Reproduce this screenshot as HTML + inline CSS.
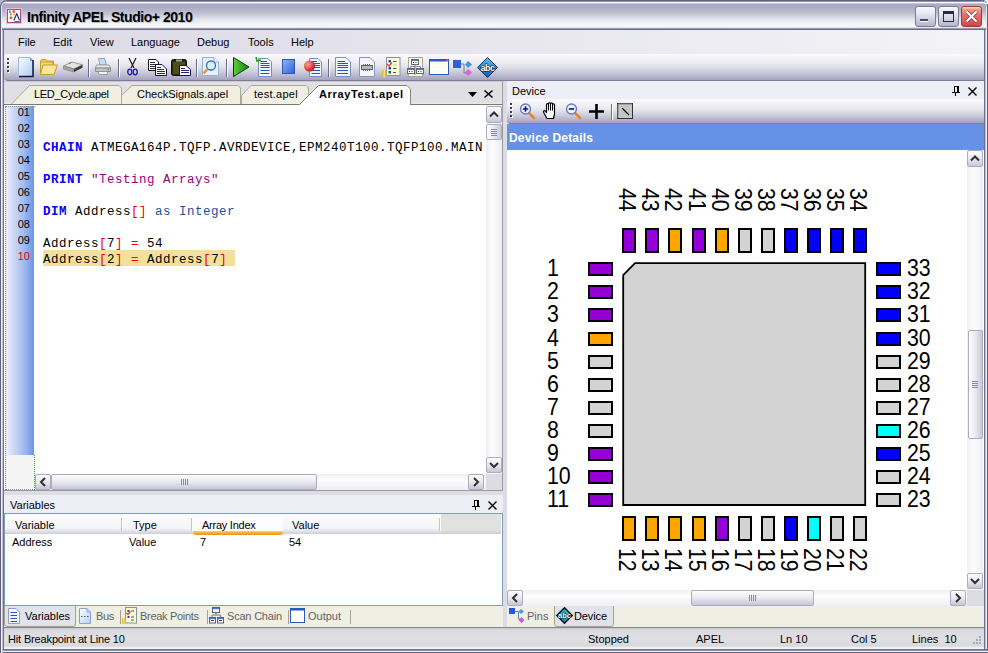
<!DOCTYPE html>
<html><head><meta charset="utf-8">
<style>
*{margin:0;padding:0;box-sizing:border-box}
html,body{width:988px;height:653px;overflow:hidden;background:#E3E2EC}
body{position:relative;font-family:"Liberation Sans",sans-serif;font-size:11px;color:#000}
.a{position:absolute}
.t{position:absolute;white-space:pre;line-height:13px}
svg{position:absolute;overflow:visible}
.sbtn{border:1px solid #ACACC0;border-radius:2px;background:linear-gradient(#FDFDFF,#E6E6EE 55%,#C6C6D6)}
.sbv{background:linear-gradient(90deg,#FDFDFF,#E6E6EE 55%,#C6C6D6)}
</style></head><body>

<!-- desktop corners -->
<div class="a" style="left:0;top:0;width:988px;height:12px;background:#B4B4CC"></div>
<!-- title bar -->
<div class="a" id="title" style="left:0;top:0;width:988px;height:30px;border:1px solid #5F5F80;border-bottom:none;border-radius:7px 7px 0 0;box-shadow:inset 1px 0 0 #E8E8F0,inset -1px 0 0 #E8E8F0;background:linear-gradient(#9090A8 0px,#9090A8 1px,#FAFAFC 1px,#FAFAFC 2px,#C8C8D8 2px,#C8C8D8 3px,#A8A8C2 3px,#ADADC5 7px,#C4C4D4 13px,#E2E2EA 18px,#F4F4F7 23px,#F8F8F8 25px,#F8F8F8 26px,#E8E6E0 26px,#E8E6E0 27px,#9A9AB0 27px,#9A9AB0 28px,#6C6C8C 28px)"></div>

<!-- frame -->
<div class="a" style="left:0;top:30px;width:4px;height:623px;background:linear-gradient(90deg,#60607E 0,#60607E 1px,#F0F0F6 1px,#F0F0F6 2px,#C0C0D0 2px,#C0C0D0 3px,#707090 3px)"></div>
<div class="a" style="left:984px;top:30px;width:4px;height:623px;background:linear-gradient(90deg,#707090 0,#707090 1px,#C0C0D0 1px,#C0C0D0 2px,#F0F0F6 2px,#F0F0F6 3px,#60607E 3px)"></div>
<div class="a" style="left:0;top:649px;width:988px;height:4px;background:linear-gradient(#6E6E8E 0,#6E6E8E 1px,#9090A8 1px,#9090A8 2px,#F0F0F6 2px,#F0F0F6 3px,#60607E 3px)"></div>
<div class="a" style="left:0;top:649px;width:3px;height:4px;background:linear-gradient(90deg,#60607E 0,#60607E 1px,#F0F0F6 1px,#F0F0F6 2px,#C0C0D0 2px)"></div>

<!-- app icon -->
<svg style="left:6px;top:8px" width="16" height="16" viewBox="0 0 16 16">
<rect x="0.5" y="0.5" width="15" height="15" fill="#fff" stroke="#E8C0D0"/>
<rect x="1.5" y="1.5" width="13" height="13" fill="#fff" stroke="#B04880"/>
<path d="M4 3.5 L9 9" stroke="#B0B0C0" stroke-width="0.8" stroke-dasharray="1 1"/>
<circle cx="4" cy="3.8" r="1.3" fill="#5AA0E0"/><circle cx="7.8" cy="3.6" r="1.5" fill="#E86030"/>
<circle cx="4.8" cy="6.6" r="1.1" fill="#70A878"/><circle cx="8.3" cy="6.5" r="1.1" fill="#D8C030"/>
<circle cx="5" cy="9.7" r="1.5" fill="#E86030"/>
<path d="M7.8 12.5 L10.8 5.8 L13.6 12.5" fill="none" stroke="#283888" stroke-width="1.2"/>
<path d="M8.5 13.5 H13.5" stroke="#5868A8"/>
</svg>
<div class="t" style="left:27px;top:9px;font-size:14px;font-weight:bold;color:#000;line-height:16px;letter-spacing:-0.45px;text-shadow:1px 1px 0 rgba(60,60,90,0.25)">Infinity APEL Studio+ 2010</div>

<!-- caption buttons -->
<div class="a" style="left:915px;top:6px;width:21px;height:21px;border:1px solid #7C7C98;border-radius:3px;background:linear-gradient(#FAFAFC,#E4E4EE 40%,#B4B4CA)"></div>
<div class="a" style="left:920px;top:19px;width:8px;height:3px;background:#4A4A66;border-bottom:1px solid #fff"></div>
<div class="a" style="left:938px;top:6px;width:21px;height:21px;border:1px solid #7C7C98;border-radius:3px;background:linear-gradient(#FAFAFC,#E4E4EE 40%,#B4B4CA)"></div>
<div class="a" style="left:943px;top:11px;width:11px;height:11px;border:1px solid #2A2A40;border-top:3px solid #2A2A40;background:transparent"></div>
<div class="a" style="left:961px;top:6px;width:21px;height:21px;border:1px solid #A83838;border-radius:3px;background:linear-gradient(#F4D8A8 0,#F4D8A8 1px,#F2A088 2px,#E87070 40%,#D85858 80%,#C84848)"></div>
<svg style="left:961px;top:6px" width="21" height="21" viewBox="0 0 21 21"><path d="M5.5 5.5 L15.5 15.5 M15.5 5.5 L5.5 15.5" stroke="#402020" stroke-width="3.6" opacity="0.55"/><path d="M5.5 5.5 L15.5 15.5 M15.5 5.5 L5.5 15.5" stroke="#fff" stroke-width="2"/></svg>
<div class="a" style="left:984px;top:0;width:4px;height:4px;background:#F8F8F0"></div>
<svg style="left:983px;top:0" width="5" height="4" viewBox="0 0 5 4"><path d="M0.5 0 L3.5 3" stroke="#0000E0" stroke-dasharray="1 0.5"/></svg>

<!-- menu bar -->
<div class="a" style="left:4px;top:30px;width:980px;height:24px;background:linear-gradient(90deg,#DAD9E4,#E2E1EB 30%,#F3F3F7)"></div>
<div class="t" style="left:18px;top:36px">File</div>
<div class="t" style="left:53px;top:36px">Edit</div>
<div class="t" style="left:90px;top:36px">View</div>
<div class="t" style="left:131px;top:36px">Language</div>
<div class="t" style="left:197px;top:36px">Debug</div>
<div class="t" style="left:248px;top:36px">Tools</div>
<div class="t" style="left:291px;top:36px">Help</div>

<!-- main toolbar -->
<div class="a" style="left:4px;top:54px;width:980px;height:27px;border-radius:4px 0 0 4px;background:linear-gradient(#FAFAFD,#F2F2F6 22%,#E2E2EA 48%,#CACADA 70%,#A4A2BF);border-bottom:1px solid #7E7C98"></div>

<!-- toolbar gripper -->
<svg style="left:7px;top:58px" width="3" height="15" viewBox="0 0 3 15"><g fill="#fff"><rect x="1" y="1" width="2" height="2"/><rect x="1" y="5" width="2" height="2"/><rect x="1" y="9" width="2" height="2"/><rect x="1" y="13" width="2" height="2"/></g><g fill="#3C3C5C"><rect x="0" y="0" width="2" height="2"/><rect x="0" y="4" width="2" height="2"/><rect x="0" y="8" width="2" height="2"/><rect x="0" y="12" width="2" height="2"/></g></svg>
<!-- new -->
<svg style="left:18px;top:57px" width="17" height="20" viewBox="0 0 17 20"><defs><linearGradient id="gdoc" x1="0" y1="0" x2="1" y2="1"><stop offset="0" stop-color="#FFFFFF"/><stop offset="1" stop-color="#A8C8F0"/></linearGradient></defs><path d="M0.5 0.5 H12 L15.5 4 V19.5 H0.5 Z" fill="url(#gdoc)" stroke="#9CB8E0"/><path d="M12 0.5 L15.5 4 H12 Z" fill="#5AA0E8"/><path d="M15 3 V19.5 H1" fill="none" stroke="#0A1A40" stroke-width="1.5"/></svg>
<!-- open -->
<svg style="left:40px;top:59px" width="18" height="16" viewBox="0 0 18 16"><path d="M0.5 2 L1.5 0.5 H6 L7 2 H13.5 V5 H0.5 Z" fill="#F0D070" stroke="#C8A030"/><path d="M0.5 3 H13 V14 H0.5 Z" fill="#F2D878" stroke="#C89A28"/><path d="M3 6 H17.5 L14 15.5 H0.5 Z" fill="#FBE89A" stroke="#C89A28"/></svg>
<!-- save/disk -->
<svg style="left:63px;top:61px" width="20" height="12" viewBox="0 0 20 12"><path d="M0.5 5 L9 1 L19.5 3.8 L11 8 Z" fill="#E4E4E4" stroke="#8A8A8A" stroke-width="0.8"/><path d="M0.5 5 L11 8 V11 L0.5 8 Z" fill="#A8A8A8" stroke="#707070" stroke-width="0.6"/><path d="M11 8 L19.5 3.8 V6.8 L11 11 Z" fill="#3A3A3A"/><path d="M6 2.6 L8 1.6" stroke="#606060"/></svg>
<div class="a" style="left:88px;top:59px;width:1px;height:18px;background:#6A6A8C;box-shadow:1px 0 0 #fff"></div>
<!-- print -->
<svg style="left:95px;top:58px" width="16" height="18" viewBox="0 0 16 18"><path d="M3.5 0.5 H9.5 L11.5 7 H5 Z" fill="#C4DEF8" stroke="#8090A8" stroke-width="0.8"/><path d="M1.5 7 H14 L15.5 10 H0.5 Z" fill="#ECECEC" stroke="#909090" stroke-width="0.8"/><path d="M0.5 10 H15.5 V13.5 H0.5 Z" fill="#C4C4C4" stroke="#7C7C7C" stroke-width="0.8"/><path d="M3 13.5 H13 L12 16.5 H4 Z" fill="#F4F4F4" stroke="#8C8C8C" stroke-width="0.8"/><rect x="12.5" y="11" width="1.5" height="1.2" fill="#40B040"/></svg>
<div class="a" style="left:118px;top:59px;width:1px;height:18px;background:#6A6A8C;box-shadow:1px 0 0 #fff"></div>
<!-- cut -->
<svg style="left:127px;top:58px" width="11" height="18" viewBox="0 0 11 18"><path d="M2 0 L7 10 M9 0 L4 10" stroke="#1A1A1A" stroke-width="1.2"/><ellipse cx="2.8" cy="14" rx="2" ry="2.8" fill="none" stroke="#1818A8" stroke-width="1.3"/><ellipse cx="8.2" cy="14" rx="2" ry="2.8" fill="none" stroke="#1818A8" stroke-width="1.3"/></svg>
<!-- copy -->
<svg style="left:148px;top:59px" width="19" height="17" viewBox="0 0 19 17"><path d="M0.5 0.5 H8 L10.5 3 V11.5 H0.5 Z" fill="#fff" stroke="#181818"/><path d="M2 3.5 H7 M2 5.5 H8 M2 7.5 H7 M2 9.5 H8" stroke="#303030"/><path d="M7.5 5.5 H14 L18.5 10 V16.5 H7.5 Z" fill="#fff" stroke="#10105A"/><path d="M9 8.5 H13 M9 10.5 H16 M9 12.5 H17 M9 14.5 H17" stroke="#20207A"/></svg>
<!-- paste -->
<svg style="left:171px;top:58px" width="21" height="18" viewBox="0 0 21 18"><rect x="0.5" y="1.5" width="15" height="16" rx="2" fill="#2A2A10" stroke="#101008"/><path d="M2 4 H14 V16 H2Z" fill="#585820" opacity="0.8"/><path d="M5 1.5 H11 V3.5 H5Z" fill="#A8A880"/><path d="M8.5 7.5 H15 L19.5 11.5 V17.5 H8.5 Z" fill="#fff" stroke="#10105A"/><path d="M10 10.5 H14 M10 12.5 H18 M10 14.5 H18" stroke="#20207A"/></svg>
<div class="a" style="left:196px;top:59px;width:1px;height:18px;background:#6A6A8C;box-shadow:1px 0 0 #fff"></div>
<!-- find -->
<svg style="left:202px;top:57px" width="17" height="19" viewBox="0 0 17 19"><path d="M0.5 0.5 H12 L16.5 5 V18.5 H0.5 Z" fill="#E8F0FC" stroke="#98B0D8"/><path d="M12 0.5 V5 H16.5" fill="#fff" stroke="#98B0D8"/><circle cx="9" cy="8.5" r="4.5" fill="#D8F0FF" stroke="#3870B8" stroke-width="1.3"/><path d="M5.5 12 L1.5 16.5" stroke="#E89030" stroke-width="2.2"/></svg>
<div class="a" style="left:226px;top:59px;width:1px;height:18px;background:#6A6A8C;box-shadow:1px 0 0 #fff"></div>
<!-- run -->
<svg style="left:233px;top:57px" width="17" height="20" viewBox="0 0 17 20"><defs><linearGradient id="grun" x1="0" y1="0" x2="1" y2="0"><stop offset="0" stop-color="#60D040"/><stop offset="1" stop-color="#108010"/></linearGradient></defs><path d="M0.5 0.5 L16 10 L0.5 19.5 Z" fill="url(#grun)" stroke="#004000"/></svg>
<!-- step doc -->
<svg style="left:255px;top:57px" width="18" height="20" viewBox="0 0 18 20"><path d="M3.5 1.5 H13 L16.5 5 V19.5 H3.5 Z" fill="#F0F4FC" stroke="#7890B8"/><path d="M5.5 4.5 H12 M5.5 6.5 H14.5 M5.5 8.5 H14.5 M5.5 10.5 H14.5 M5.5 13.5 H14.5 M5.5 16.5 H14.5" stroke="#3050B8"/><path d="M1 0 L2 4 L6 3" fill="none" stroke="#20A020" stroke-width="1.5"/></svg>
<!-- stop -->
<svg style="left:282px;top:59px" width="13" height="15" viewBox="0 0 13 15"><defs><linearGradient id="gstop" x1="0" y1="0" x2="1" y2="1"><stop offset="0" stop-color="#90B8F8"/><stop offset="1" stop-color="#3060D0"/></linearGradient></defs><rect x="0.5" y="0.5" width="12" height="14" fill="url(#gstop)" stroke="#3058B8"/></svg>
<!-- breakpoint doc -->
<svg style="left:304px;top:57px" width="19" height="20" viewBox="0 0 19 20"><path d="M5.5 1.5 H14 L17.5 5 V19.5 H5.5 Z" fill="#F0F4FC" stroke="#7890B8"/><path d="M7.5 4.5 H13 M7.5 6.5 H16 M7.5 8.5 H16 M7.5 10.5 H16 M7.5 13.5 H16 M7.5 16.5 H16" stroke="#3050B8"/><defs><radialGradient id="gbp" cx="0.35" cy="0.35" r="0.7"><stop offset="0" stop-color="#FFA0A0"/><stop offset="1" stop-color="#C81010"/></radialGradient></defs><circle cx="5.5" cy="9" r="5.5" fill="url(#gbp)"/></svg>
<div class="a" style="left:328px;top:59px;width:1px;height:18px;background:#6A6A8C;box-shadow:1px 0 0 #fff"></div>
<!-- doc -->
<svg style="left:335px;top:57px" width="16" height="20" viewBox="0 0 16 20"><path d="M0.5 0.5 H11 L15.5 5 V19.5 H0.5 Z" fill="#F0F4FC" stroke="#7890B8"/><path d="M2.5 4.5 H10 M2.5 6.5 H13 M2.5 8.5 H13 M2.5 10.5 H13 M2.5 13.5 H13 M2.5 16.5 H13" stroke="#3050B8"/></svg>
<!-- doc chip -->
<svg style="left:359px;top:57px" width="16" height="20" viewBox="0 0 16 20"><path d="M0.5 0.5 H11 L15.5 5 V19.5 H0.5 Z" fill="#F4F6FC" stroke="#8898B8"/><rect x="2.5" y="8.5" width="11" height="4" fill="#B8B8C0" stroke="#606068"/><path d="M4.5 7 V8 M6.5 7 V8 M8.5 7 V8 M10.5 7 V8 M4.5 13 V14 M6.5 13 V14 M8.5 13 V14 M10.5 13 V14" stroke="#606068"/></svg>
<!-- checklist -->
<svg style="left:382px;top:57px" width="19" height="20" viewBox="0 0 19 20"><rect x="4.5" y="0.5" width="13.5" height="18" fill="#FFFCD8" stroke="#8890A0"/><rect x="6.5" y="3" width="2.5" height="2.5" fill="#205090"/><rect x="6.5" y="10" width="2.5" height="2.5" fill="#205090"/><rect x="6.5" y="14" width="2.5" height="2.5" fill="#205090"/><path d="M5 7 L7 9 L10 5.5" fill="none" stroke="#E04030" stroke-width="1.4"/><path d="M11 4.5 H14.5 M11 11.5 H14.5 M11 15.5 H14" stroke="#405080"/><path d="M11 8 H15" stroke="#C8C8B8"/><rect x="0" y="13" width="4.5" height="7" rx="1" fill="#E8B830"/><rect x="1.5" y="13" width="1.5" height="7" fill="#F8E080"/></svg>
<!-- hierarchy -->
<svg style="left:407px;top:57px" width="17" height="20" viewBox="0 0 17 20"><rect x="1.5" y="0.5" width="14" height="19" fill="#FFFAD0" stroke="#A0A898"/><rect x="4.5" y="2.5" width="7" height="5" fill="#fff" stroke="#606878"/><rect x="5" y="3" width="6" height="1" fill="#4878D8"/><path d="M6 5.5 H7 M8.5 5.5 H9.5" stroke="#404850"/><path d="M8 7.5 V9.5 M3.5 9.5 H13.5 M3.5 9.5 V11 M13.5 9.5 V11 M8 9.5 V18" stroke="#808890"/><rect x="0.5" y="11.5" width="7" height="5" fill="#fff" stroke="#606878"/><rect x="1" y="12" width="6" height="1" fill="#4878D8"/><rect x="9.5" y="11.5" width="7" height="5" fill="#fff" stroke="#606878"/><rect x="10" y="12" width="6" height="1" fill="#4878D8"/><path d="M2 14.5 H3 M4.5 14.5 H5.5 M11 14.5 H12 M13.5 14.5 H14.5" stroke="#404850"/></svg>
<!-- window -->
<svg style="left:429px;top:59px" width="20" height="16" viewBox="0 0 20 16"><rect x="0.5" y="0.5" width="19" height="15" fill="#FFFFF4" stroke="#2858B8"/><rect x="0" y="0" width="20" height="2.5" fill="#2858C8"/><rect x="17" y="0.5" width="2" height="1.5" fill="#E06040"/></svg>
<!-- flow -->
<svg style="left:453px;top:60px" width="21" height="16" viewBox="0 0 21 16"><path d="M8 4 H11 M11 4 V13 H14" stroke="#6080A0" fill="none"/><rect x="0" y="0" width="8" height="8" fill="#3060D8"/><path d="M15 1 L19 4.5 L15 8 L12 4.5 Z" fill="#4890E8"/><path d="M15 9 L19 12.5 L15 16 L12 12.5 Z" fill="#E060E0"/></svg>
<!-- abc -->
<svg style="left:477px;top:57px" width="21" height="21" viewBox="0 0 21 21"><defs><linearGradient id="gabc" x1="0" y1="0" x2="0" y2="1"><stop offset="0" stop-color="#60C0F8"/><stop offset="1" stop-color="#0858A8"/></linearGradient></defs><path d="M10.5 0.5 L20.5 10.5 L10.5 20.5 L0.5 10.5 Z" fill="url(#gabc)" stroke="#083060"/><text x="10.5" y="13.5" font-family="Liberation Sans" font-size="9" font-weight="bold" text-anchor="middle" fill="#fff" stroke="#002040" stroke-width="1.2" paint-order="stroke" letter-spacing="-0.5">abc</text></svg>

<!-- left tab strip -->
<div class="a" style="left:4px;top:81px;width:499px;height:24px;background:linear-gradient(#BDBCC6 0,#E2E2E6 1.5px,#E0E0E4 3px,#E0E0E4 21px,#E8E8EC 22px)"></div>
<div class="a" style="left:4px;top:104px;width:499px;height:1px;background:#ACA899"></div>

<!-- doc tabs -->
<svg style="left:0;top:80px" width="505" height="26" viewBox="0 80 505 26">
<path d="M11 104.5 L29.5 85.5 H119 L121.5 88 V104" fill="#F1EFE2" stroke="#ACA899"/>
<path d="M121.5 104 V95.5 L132 85.5 H238 L240.5 88 V104" fill="#F1EFE2" stroke="#ACA899"/>
<path d="M241.5 104 V95.5 L251 85.5 H306 L308.5 88 V104" fill="#F1EFE2" stroke="#ACA899"/>
<path d="M299 105 L318.5 85.5 H407 L410.5 89 V105" fill="#FFFFFF" stroke="#8A877A"/>
<path d="M4 104.5 H299 M410.5 104.5 H502" stroke="#7C7A6C"/>
<path d="M468 92 H477 L472.5 97 Z" fill="#000"/>
<path d="M484.5 90.5 L492.5 97.5 M492.5 90.5 L484.5 97.5" stroke="#000" stroke-width="1.6"/>
</svg>
<div class="t" style="left:34px;top:88px;letter-spacing:-0.3px">LED_Cycle.apel</div>
<div class="t" style="left:137px;top:88px">CheckSignals.apel</div>
<div class="t" style="left:254px;top:88px;letter-spacing:0.25px">test.apel</div>
<div class="t" style="left:319px;top:88px;font-weight:bold;letter-spacing:0.65px">ArrayTest.apel</div>

<!-- splitter -->
<div class="a" style="left:502px;top:81px;width:1px;height:410px;background:#9A9AA2"></div>
<div class="a" style="left:503px;top:81px;width:4px;height:546px;background:#DCDCE2"></div>

<!-- editor -->
<div class="a" style="left:4px;top:105px;width:498px;height:385px;background:#fff"></div>
<div class="a" style="left:5px;top:106px;width:29px;height:349px;background:linear-gradient(90deg,#F0F2FA,#A8C0F0 60%,#6A96E6)"></div>
<div class="a" style="left:5px;top:455px;width:29px;height:35px;background:#F4F4F4"></div>

<!-- gutter dotted border -->
<div class="a" style="left:5px;top:106px;width:30px;height:384px;border-left:1px dotted #8C8CA0;border-top:1px dotted #8C8CA0;border-bottom:1px dotted #8C8CA0"></div>
<div class="a" style="left:34px;top:455px;width:1px;height:35px;border-left:1px dotted #4A80E0"></div>
<div class="a" style="left:5px;top:103px;width:30px;height:176px;font-size:11px;line-height:16px;text-align:right;padding-right:5px;padding-top:1px;color:#000;white-space:pre">01
02
03
04
05
06
07
08
09
<span style="color:#E00000">10</span></div>
<div class="a" style="left:43px;top:250px;width:192px;height:16px;background:#F3E09A"></div>
<div class="a" style="left:43px;top:108px;font-family:'Liberation Mono',monospace;font-size:12.5px;letter-spacing:0.5px;line-height:16px;white-space:pre;color:#000"><br><br><b style="color:#0000FF">CHAIN</b> ATMEGA164P.TQFP.AVRDEVICE,EPM240T100.TQFP100.MAIN
<br><b style="color:#0000FF">PRINT</b> <span style="color:#990080">"Testing Arrays"</span>
<br><b style="color:#0000FF">DIM</b> Address<span style="color:#F00000">[]</span> <span style="color:#1A4F9A">as Integer</span>
<br>Address<span style="color:#F00000">[</span>7<span style="color:#F00000">]</span> <span style="color:#F00000">=</span> 54
Address<span style="color:#F00000">[</span>2<span style="color:#F00000">]</span> <span style="color:#F00000">=</span> Address<span style="color:#F00000">[</span>7<span style="color:#F00000">]</span></div>

<!-- editor v scrollbar -->
<div class="a" style="left:486px;top:105px;width:16px;height:369px;background:linear-gradient(90deg,#F0F0F4,#FDFDFF 40%,#EEEEF2)"></div>
<div class="a sbtn" style="left:486px;top:106px;width:16px;height:17px"></div>
<svg style="left:486px;top:106px" width="16" height="17" viewBox="0 0 16 17"><path d="M4 10.5 L8 6.5 L12 10.5" fill="none" stroke="#303030" stroke-width="2"/></svg>
<div class="a sbtn sbv" style="left:486px;top:124px;width:16px;height:16px"></div>
<svg style="left:486px;top:124px" width="16" height="16" viewBox="0 0 16 16"><path d="M5 5.5 H11 M5 7.5 H11 M5 9.5 H11 M5 11.5 H11" stroke="#8A8AA0"/></svg>
<div class="a sbtn" style="left:486px;top:457px;width:16px;height:16px"></div>
<svg style="left:486px;top:457px" width="16" height="16" viewBox="0 0 16 16"><path d="M4 6 L8 10 L12 6" fill="none" stroke="#303030" stroke-width="2"/></svg>
<!-- editor h scrollbar -->
<div class="a" style="left:35px;top:474px;width:451px;height:16px;background:linear-gradient(#F0F0F4,#FDFDFF 40%,#EEEEF2)"></div>
<div class="a sbtn" style="left:35px;top:474px;width:16px;height:16px"></div>
<svg style="left:35px;top:474px" width="16" height="16" viewBox="0 0 16 16"><path d="M10 4 L6 8 L10 12" fill="none" stroke="#303030" stroke-width="2"/></svg>
<div class="a sbtn" style="left:51px;top:474px;width:266px;height:16px"></div>
<svg style="left:176px;top:474px" width="16" height="16" viewBox="0 0 16 16"><path d="M5.5 5 V11 M7.5 5 V11 M9.5 5 V11 M11.5 5 V11" stroke="#8A8AA0"/></svg>
<div class="a sbtn" style="left:468px;top:474px;width:16px;height:16px"></div>
<svg style="left:468px;top:474px" width="16" height="16" viewBox="0 0 16 16"><path d="M6 4 L10 8 L6 12" fill="none" stroke="#303030" stroke-width="2"/></svg>
<div class="a" style="left:486px;top:474px;width:16px;height:16px;background:#DCDCE2"></div>

<!-- right pane header -->
<div class="a" style="left:507px;top:81px;width:477px;height:18px;background:#EEEEF6"></div>
<div class="t" style="left:512px;top:85px">Device</div>
<div class="a" style="left:507px;top:99px;width:477px;height:25px;border-radius:4px 0 0 4px;background:linear-gradient(#FAFAFD,#F2F2F6 22%,#E2E2EA 48%,#CACADA 70%,#A4A2BF);border-bottom:1px solid #7E7C98"></div>
<div class="a" style="left:507px;top:124px;width:477px;height:26px;background:#6592E6"></div>
<div class="t" style="left:509px;top:131px;font-size:12px;font-weight:bold;color:#fff;line-height:14px;letter-spacing:0.2px">Device Details</div>
<div class="a" style="left:507px;top:150px;width:477px;height:456px;background:#fff"></div>

<!-- canvas -->
<svg style="left:0;top:0" width="988" height="653" viewBox="0 0 988 653">
<path d="M635 263.2 L865.2 263.2 L865.2 505 L623.2 505 L623.2 275 Z" fill="#D3D3D3" stroke="#000" stroke-width="1.8"/>
<g stroke="#000" stroke-width="2">
<rect x="623" y="229" width="12" height="23" fill="#9400D3"/>
<rect x="646" y="229" width="12" height="23" fill="#9400D3"/>
<rect x="669" y="229" width="12" height="23" fill="#FFA500"/>
<rect x="693" y="229" width="12" height="23" fill="#9400D3"/>
<rect x="716" y="229" width="12" height="23" fill="#FFA500"/>
<rect x="739" y="229" width="12" height="23" fill="#D3D3D3"/>
<rect x="762" y="229" width="12" height="23" fill="#D3D3D3"/>
<rect x="785" y="229" width="12" height="23" fill="#0000FF"/>
<rect x="808" y="229" width="12" height="23" fill="#0000FF"/>
<rect x="831" y="229" width="12" height="23" fill="#0000FF"/>
<rect x="854" y="229" width="12" height="23" fill="#0000FF"/>
<rect x="623" y="517" width="12" height="23" fill="#FFA500"/>
<rect x="646" y="517" width="12" height="23" fill="#FFA500"/>
<rect x="669" y="517" width="12" height="23" fill="#FFA500"/>
<rect x="693" y="517" width="12" height="23" fill="#FFA500"/>
<rect x="716" y="517" width="12" height="23" fill="#9400D3"/>
<rect x="739" y="517" width="12" height="23" fill="#D3D3D3"/>
<rect x="762" y="517" width="12" height="23" fill="#D3D3D3"/>
<rect x="785" y="517" width="12" height="23" fill="#0000FF"/>
<rect x="808" y="517" width="12" height="23" fill="#00FFFF"/>
<rect x="831" y="517" width="12" height="23" fill="#D3D3D3"/>
<rect x="854" y="517" width="12" height="23" fill="#D3D3D3"/>
<rect x="589" y="263" width="23" height="12" fill="#9400D3"/>
<rect x="589" y="286" width="23" height="12" fill="#9400D3"/>
<rect x="589" y="309" width="23" height="12" fill="#9400D3"/>
<rect x="589" y="333" width="23" height="12" fill="#FFA500"/>
<rect x="589" y="356" width="23" height="12" fill="#D3D3D3"/>
<rect x="589" y="379" width="23" height="12" fill="#D3D3D3"/>
<rect x="589" y="402" width="23" height="12" fill="#D3D3D3"/>
<rect x="589" y="425" width="23" height="12" fill="#D3D3D3"/>
<rect x="589" y="448" width="23" height="12" fill="#9400D3"/>
<rect x="589" y="471" width="23" height="12" fill="#9400D3"/>
<rect x="589" y="494" width="23" height="12" fill="#9400D3"/>
<rect x="877" y="263" width="23" height="12" fill="#0000FF"/>
<rect x="877" y="286" width="23" height="12" fill="#0000FF"/>
<rect x="877" y="309" width="23" height="12" fill="#0000FF"/>
<rect x="877" y="333" width="23" height="12" fill="#0000FF"/>
<rect x="877" y="356" width="23" height="12" fill="#D3D3D3"/>
<rect x="877" y="379" width="23" height="12" fill="#D3D3D3"/>
<rect x="877" y="402" width="23" height="12" fill="#D3D3D3"/>
<rect x="877" y="425" width="23" height="12" fill="#00FFFF"/>
<rect x="877" y="448" width="23" height="12" fill="#0000FF"/>
<rect x="877" y="471" width="23" height="12" fill="#D3D3D3"/>
<rect x="877" y="494" width="23" height="12" fill="#D3D3D3"/>
</g>
<g font-family="Liberation Sans" font-size="24" fill="#000">
<text transform="translate(547,276) scale(0.89,1)">1</text>
<text transform="translate(547,299) scale(0.89,1)">2</text>
<text transform="translate(547,322) scale(0.89,1)">3</text>
<text transform="translate(547,346) scale(0.89,1)">4</text>
<text transform="translate(547,369) scale(0.89,1)">5</text>
<text transform="translate(547,392) scale(0.89,1)">6</text>
<text transform="translate(547,415) scale(0.89,1)">7</text>
<text transform="translate(547,438) scale(0.89,1)">8</text>
<text transform="translate(547,461) scale(0.89,1)">9</text>
<text transform="translate(547,484) scale(0.89,1)">10</text>
<text transform="translate(547,507) scale(0.89,1)">11</text>
<text transform="translate(907,276) scale(0.89,1)">33</text>
<text transform="translate(907,299) scale(0.89,1)">32</text>
<text transform="translate(907,322) scale(0.89,1)">31</text>
<text transform="translate(907,346) scale(0.89,1)">30</text>
<text transform="translate(907,369) scale(0.89,1)">29</text>
<text transform="translate(907,392) scale(0.89,1)">28</text>
<text transform="translate(907,415) scale(0.89,1)">27</text>
<text transform="translate(907,438) scale(0.89,1)">26</text>
<text transform="translate(907,461) scale(0.89,1)">25</text>
<text transform="translate(907,484) scale(0.89,1)">24</text>
<text transform="translate(907,507) scale(0.89,1)">23</text>
<text transform="translate(619,188) rotate(90) scale(0.89,1)">44</text>
<text transform="translate(642,188) rotate(90) scale(0.89,1)">43</text>
<text transform="translate(665,188) rotate(90) scale(0.89,1)">42</text>
<text transform="translate(689,188) rotate(90) scale(0.89,1)">41</text>
<text transform="translate(712,188) rotate(90) scale(0.89,1)">40</text>
<text transform="translate(735,188) rotate(90) scale(0.89,1)">39</text>
<text transform="translate(758,188) rotate(90) scale(0.89,1)">38</text>
<text transform="translate(781,188) rotate(90) scale(0.89,1)">37</text>
<text transform="translate(804,188) rotate(90) scale(0.89,1)">36</text>
<text transform="translate(827,188) rotate(90) scale(0.89,1)">35</text>
<text transform="translate(850,188) rotate(90) scale(0.89,1)">34</text>
<text transform="translate(619,548) rotate(90) scale(0.89,1)">12</text>
<text transform="translate(642,548) rotate(90) scale(0.89,1)">13</text>
<text transform="translate(665,548) rotate(90) scale(0.89,1)">14</text>
<text transform="translate(689,548) rotate(90) scale(0.89,1)">15</text>
<text transform="translate(712,548) rotate(90) scale(0.89,1)">16</text>
<text transform="translate(735,548) rotate(90) scale(0.89,1)">17</text>
<text transform="translate(758,548) rotate(90) scale(0.89,1)">18</text>
<text transform="translate(781,548) rotate(90) scale(0.89,1)">19</text>
<text transform="translate(804,548) rotate(90) scale(0.89,1)">20</text>
<text transform="translate(827,548) rotate(90) scale(0.89,1)">21</text>
<text transform="translate(850,548) rotate(90) scale(0.89,1)">22</text>
</g></svg>

<!-- variables panel -->
<div class="a" style="left:4px;top:490px;width:499px;height:5px;background:linear-gradient(#9A9A9E 0,#9A9A9E 1px,#DDDDE2 1px)"></div>
<div class="a" style="left:4px;top:495px;width:499px;height:18px;background:#EEEEF6"></div>
<div class="t" style="left:10px;top:499px">Variables</div>
<div class="a" style="left:4px;top:513px;width:499px;height:93px;background:#fff;border:1px solid #7F9DB9"></div>

<!-- bottom tab strip -->
<div class="a" style="left:4px;top:606px;width:499px;height:21px;background:#F0EFE4"></div>
<div class="a" style="left:507px;top:606px;width:477px;height:21px;background:#F0EFE4"></div>

<!-- status bar -->
<div class="a" style="left:4px;top:627px;width:980px;height:22px;background:linear-gradient(#88888E 0,#88888E 1px,#C4C4CC 1px,#DADADF 3px,#E0E0E4 12px,#D8D8DD 19px,#F6F6F8 21px)"></div>
<div class="t" style="left:8px;top:633px;letter-spacing:-0.15px">Hit Breakpoint at Line 10</div>
<div class="t" style="left:588px;top:633px">Stopped</div>
<div class="t" style="left:696px;top:633px">APEL</div>
<div class="t" style="left:780px;top:633px">Ln 10</div>
<div class="t" style="left:851px;top:633px">Col 5</div>
<div class="t" style="left:912px;top:633px">Lines  10</div>

<!-- variables list -->
<div class="a" style="left:5px;top:514px;width:436px;height:20px;background:linear-gradient(#FBFBFD,#F6F6FA 70%,#E2E2EA 85%,#CFCFDA)"></div>
<div class="a" style="left:441px;top:514px;width:60px;height:20px;background:linear-gradient(#DFE2DF 80%,#CCCFCC)"></div>
<div class="a" style="left:193px;top:514px;width:90px;height:18px;background:#FCFCFE"></div>
<div class="a" style="left:193px;top:531px;width:90px;height:4px;border-radius:0 0 3px 3px;background:linear-gradient(#FBD27A,#F3A82A 60%,#E89418)"></div>
<div class="a" style="left:121px;top:518px;width:1px;height:13px;background:#C4C4D0;box-shadow:1px 0 0 #fff"></div>
<div class="a" style="left:191px;top:518px;width:1px;height:13px;background:#C4C4D0;box-shadow:1px 0 0 #fff"></div>
<div class="a" style="left:439px;top:518px;width:1px;height:13px;background:#C4C4D0;box-shadow:1px 0 0 #fff"></div>
<div class="t" style="left:15px;top:519px">Variable</div>
<div class="t" style="left:133px;top:519px">Type</div>
<div class="t" style="left:202px;top:519px;letter-spacing:-0.25px">Array Index</div>
<div class="t" style="left:292px;top:519px">Value</div>
<div class="t" style="left:12px;top:536px">Address</div>
<div class="t" style="left:129px;top:536px">Value</div>
<div class="t" style="left:200px;top:536px">7</div>
<div class="t" style="left:289px;top:536px">54</div>

<!-- panel pin & close icons -->
<svg style="left:472px;top:500px" width="26" height="10" viewBox="0 0 26 10"><path d="M2 0.5 H6 M2.5 0.5 V6.5 M0 6.5 H8 M3.5 7 V10" stroke="#000" fill="none"/><rect x="5" y="0" width="2" height="6" fill="#000"/><path d="M16.5 1.5 L24.5 9.5 M24.5 1.5 L16.5 9.5" stroke="#000" stroke-width="1.4"/></svg>
<svg style="left:952px;top:86px" width="26" height="10" viewBox="0 0 26 10"><path d="M2 0.5 H6 M2.5 0.5 V6.5 M0 6.5 H8 M3.5 7 V10" stroke="#000" fill="none"/><rect x="5" y="0" width="2" height="6" fill="#000"/><path d="M16.5 1.5 L24.5 9.5 M24.5 1.5 L16.5 9.5" stroke="#000" stroke-width="1.4"/></svg>

<!-- device toolbar icons -->
<svg style="left:510px;top:103px" width="3" height="15" viewBox="0 0 3 15"><g fill="#fff"><rect x="1" y="1" width="2" height="2"/><rect x="1" y="5" width="2" height="2"/><rect x="1" y="9" width="2" height="2"/><rect x="1" y="13" width="2" height="2"/></g><g fill="#3C3C5C"><rect x="0" y="0" width="2" height="2"/><rect x="0" y="4" width="2" height="2"/><rect x="0" y="8" width="2" height="2"/><rect x="0" y="12" width="2" height="2"/></g></svg>
<svg style="left:519px;top:102px" width="18" height="18" viewBox="0 0 18 18"><path d="M9.5 10.5 L15 16" stroke="#E08828" stroke-width="2.6" stroke-linecap="round"/><circle cx="6.5" cy="7" r="5" fill="#E8F4FF" stroke="#6878B8" stroke-width="1.3"/><path d="M3.8 7 H9.2 M6.5 4.3 V9.7" stroke="#101080" stroke-width="1.6"/></svg>
<svg style="left:543px;top:102px" width="14" height="18" viewBox="0 0 14 18"><path d="M4 16.5 L1.5 12 L0.5 10 Q0.3 8.5 1.8 8.7 L3.5 10.5 V3 Q3.5 1.5 4.5 1.5 Q5.5 1.5 5.5 2.5 V1.8 Q5.5 0.8 6.5 0.8 Q7.5 0.8 7.5 1.8 Q7.5 0.8 8.5 0.8 Q9.5 0.8 9.5 1.8 V2.5 Q9.5 1.8 10.5 1.8 Q11.5 1.8 11.5 3 V12 L10.5 16.5 Z" fill="#fff" stroke="#000" stroke-width="1.2" stroke-linejoin="round"/><path d="M5.5 2.5 V8.5 M7.5 1.8 V8.5 M9.5 2.5 V8.5" stroke="#000" stroke-width="1"/></svg>
<svg style="left:565px;top:102px" width="18" height="18" viewBox="0 0 18 18"><path d="M9.5 10.5 L15 16" stroke="#E08828" stroke-width="2.6" stroke-linecap="round"/><circle cx="6.5" cy="7" r="5" fill="#E8F4FF" stroke="#6878B8" stroke-width="1.3"/><path d="M3.8 7 H9.2" stroke="#101080" stroke-width="1.6"/></svg>
<svg style="left:589px;top:104px" width="15" height="15" viewBox="0 0 15 15"><path d="M0 7.5 H15 M7.5 0 V15" stroke="#000" stroke-width="2.6"/></svg>
<div class="a" style="left:611px;top:104px;width:1px;height:16px;background:#6A6A8C;box-shadow:1px 0 0 #fff"></div>
<svg style="left:617px;top:103px" width="16" height="16" viewBox="0 0 16 16"><rect x="0.5" y="0.5" width="15" height="15" fill="#C6C6C6" stroke="#303030"/><path d="M1 1 H15 M1 1 V15" stroke="#808080"/><path d="M4 4 L12 12" stroke="#000" stroke-width="1.3"/><path d="M3.5 3.5 L6 4.5 L4.5 6 Z" fill="#fff"/></svg>

<!-- device scrollbars -->
<div class="a" style="left:967px;top:150px;width:16px;height:440px;background:linear-gradient(90deg,#F0F0F4,#FDFDFF 40%,#EEEEF2)"></div>
<div class="a sbtn" style="left:967px;top:150px;width:16px;height:17px"></div>
<svg style="left:967px;top:150px" width="16" height="17" viewBox="0 0 16 17"><path d="M4 10.5 L8 6.5 L12 10.5" fill="none" stroke="#303030" stroke-width="2"/></svg>
<div class="a sbtn sbv" style="left:968px;top:330px;width:15px;height:109px"></div>
<svg style="left:967px;top:376px" width="16" height="16" viewBox="0 0 16 16"><path d="M5 5.5 H11 M5 7.5 H11 M5 9.5 H11 M5 11.5 H11" stroke="#8A8AA0"/></svg>
<div class="a sbtn" style="left:967px;top:573px;width:16px;height:16px"></div>
<svg style="left:967px;top:573px" width="16" height="16" viewBox="0 0 16 16"><path d="M4 6 L8 10 L12 6" fill="none" stroke="#303030" stroke-width="2"/></svg>
<div class="a" style="left:507px;top:590px;width:460px;height:16px;background:linear-gradient(#F0F0F4,#FDFDFF 40%,#EEEEF2)"></div>
<div class="a sbtn" style="left:507px;top:590px;width:16px;height:16px"></div>
<svg style="left:507px;top:590px" width="16" height="16" viewBox="0 0 16 16"><path d="M10 4 L6 8 L10 12" fill="none" stroke="#303030" stroke-width="2"/></svg>
<div class="a sbtn" style="left:691px;top:590px;width:123px;height:16px"></div>
<svg style="left:744px;top:590px" width="16" height="16" viewBox="0 0 16 16"><path d="M5.5 5 V11 M7.5 5 V11 M9.5 5 V11 M11.5 5 V11" stroke="#8A8AA0"/></svg>
<div class="a sbtn" style="left:950px;top:590px;width:16px;height:16px"></div>
<svg style="left:950px;top:590px" width="16" height="16" viewBox="0 0 16 16"><path d="M6 4 L10 8 L6 12" fill="none" stroke="#303030" stroke-width="2"/></svg>
<div class="a" style="left:967px;top:590px;width:17px;height:16px;background:#DCDCE2"></div>

<!-- bottom tabs left -->
<svg style="left:0;top:604px" width="505" height="24" viewBox="0 604 505 24">
<path d="M4.5 606 V624 Q4.5 626.5 7 626.5 H73 Q75.5 626.5 75.5 624 V606" fill="#E2E2EA" stroke="#A8A48C"/>
<path d="M120.5 610 V624 M207.5 610 V624 M288.5 610 V624 M350.5 610 V624" stroke="#A8A48C"/>
</svg>
<svg style="left:8px;top:608px" width="12" height="16" viewBox="0 0 12 16"><path d="M0.5 0.5 H8 L11.5 4 V15.5 H0.5 Z" fill="#F4F8FF" stroke="#8AA0C8"/><path d="M2.5 4.5 H9 M2.5 7.5 H9 M2.5 10.5 H9 M2.5 13.5 H9" stroke="#2850C8"/></svg>
<div class="t" style="left:25px;top:610px">Variables</div>
<svg style="left:79px;top:608px" width="12" height="16" viewBox="0 0 12 16"><defs><linearGradient id="gbus" x1="0" y1="0" x2="1" y2="1"><stop offset="0" stop-color="#FFFFFF"/><stop offset="1" stop-color="#B8D0F4"/></linearGradient></defs><path d="M0.5 0.5 H8 L11.5 4 V15.5 H0.5 Z" fill="url(#gbus)" stroke="#8AA0D0"/><path d="M8 0.5 V4 H11.5" fill="none" stroke="#8AA0D0"/><path d="M2 8.5 H3.5 M5 8.5 H6.5 M8 8.5 H9.5" stroke="#3060B0"/></svg>
<div class="t" style="left:96px;top:610px;color:#636363;letter-spacing:-0.4px">Bus</div>
<svg style="left:122px;top:607px" width="15" height="17" viewBox="0 0 15 17"><rect x="3.5" y="0.5" width="11" height="15.5" fill="#FFFCD8" stroke="#8890A0"/><rect x="5.5" y="3" width="2" height="2" fill="#205090"/><rect x="5.5" y="9" width="2" height="2" fill="#205090"/><path d="M4.5 6 L6 7.5 L8.5 4.5" fill="none" stroke="#E04030" stroke-width="1.2"/><path d="M9 4 H12 M9 10 H12 M9 13 H12" stroke="#405080"/><rect x="0" y="11" width="4" height="6" rx="1" fill="#E8B830"/><rect x="1.2" y="11" width="1.3" height="6" fill="#F8E080"/></svg>
<div class="t" style="left:140px;top:610px;color:#636363;letter-spacing:-0.3px">Break Points</div>
<svg style="left:209px;top:607px" width="15" height="17" viewBox="0 0 15 17"><rect x="3.5" y="0.5" width="7" height="5" fill="#fff" stroke="#506078"/><rect x="4" y="1" width="6" height="1.2" fill="#4878D8"/><path d="M7 5.5 V8 M3 8 H11.5 M3 8 V10 M11.5 8 V10" stroke="#707880"/><rect x="0.5" y="10.5" width="6" height="5.5" fill="#fff" stroke="#506078"/><rect x="1" y="11" width="5" height="1.2" fill="#4878D8"/><rect x="8.5" y="10.5" width="6" height="5.5" fill="#fff" stroke="#506078"/><rect x="9" y="11" width="5" height="1.2" fill="#4878D8"/><path d="M2 13.5 H5 M10 13.5 H13" stroke="#404850"/></svg>
<div class="t" style="left:227px;top:610px;color:#636363;letter-spacing:-0.2px">Scan Chain</div>
<svg style="left:290px;top:608px" width="15" height="15" viewBox="0 0 15 15"><rect x="0.5" y="0.5" width="14" height="14" fill="#FFFFF8" stroke="#2858B8"/><rect x="0" y="0" width="15" height="2.5" fill="#2858C8"/></svg>
<div class="t" style="left:308px;top:610px;color:#636363">Output</div>

<!-- bottom tabs right -->
<svg style="left:505px;top:604px" width="480" height="24" viewBox="505 604 480 24">
<path d="M554.5 606 V624 Q554.5 626.5 557 626.5 H611 Q613.5 626.5 613.5 624 V606" fill="#E2E2EA" stroke="#A8A48C"/>
</svg>
<svg style="left:509px;top:608px" width="16" height="16" viewBox="0 0 16 16"><path d="M6 3.5 H9.5 V11 H11" stroke="#6080A0" fill="none"/><rect x="0" y="0" width="6" height="6" fill="#2858D8"/><path d="M12 1 L15 3.5 L12 6 L9.5 3.5 Z" fill="#4898E8"/><path d="M12.5 9 L15.5 12 L12.5 15 L9.5 12 Z" fill="#E050D8"/></svg>
<div class="t" style="left:527px;top:610px;color:#636363">Pins</div>
<svg style="left:556px;top:607px" width="17" height="17" viewBox="0 0 17 17"><path d="M8.5 0.8 L16.2 8.5 L8.5 16.2 L0.8 8.5 Z" fill="#1898A0" stroke="#001828" stroke-width="1.5"/><path d="M3 8.5 L8.5 3 L14 8.5" fill="none" stroke="#60D0D0" stroke-width="1"/><text x="8.5" y="11" font-family="Liberation Sans" font-size="7.5" font-weight="bold" text-anchor="middle" fill="#E8FFFF" stroke="#000" stroke-width="0.7" paint-order="stroke">abc</text></svg>
<div class="t" style="left:574px;top:610px;letter-spacing:-0.1px">Device</div>

<!-- status grip -->
<svg style="left:971px;top:636px" width="12" height="11" viewBox="0 0 12 11"><g fill="#A8A8B8"><rect x="8" y="0" width="2" height="2"/><rect x="5" y="3" width="2" height="2"/><rect x="8" y="3" width="2" height="2"/><rect x="2" y="6" width="2" height="2"/><rect x="5" y="6" width="2" height="2"/><rect x="8" y="6" width="2" height="2"/></g></svg>

</body></html>
